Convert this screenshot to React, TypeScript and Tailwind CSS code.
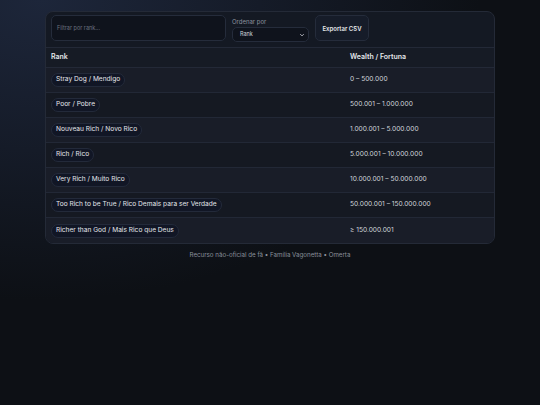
import React from "react";

const rows = [
  ["Stray Dog / Mendigo", "0 – 500.000"],
  ["Poor / Pobre", "500.001 – 1.000.000"],
  ["Nouveau Rich / Novo Rico", "1.000.001 – 5.000.000"],
  ["Rich / Rico", "5.000.001 – 10.000.000"],
  ["Very Rich / Muito Rico", "10.000.001 – 50.000.000"],
  ["Too Rich to be True / Rico Demais para ser Verdade", "50.000.001 – 150.000.000"],
  ["Richer than God / Mais Rico que Deus", "≥ 150.000.001"],
];

export default function App() {
  return (
    <div
      className="min-h-[405px] w-full pt-[11px] text-[#e5e7eb]"
      style={{
        fontFamily: "Inter, 'Noto Sans', sans-serif",
        background:
          "radial-gradient(ellipse 440px 300px at 40px 0px, #1d263a 0%, #151b28 50%, #0d1015 100%), #0d1015",
      }}
    >
      <div className="mx-auto w-[450px] overflow-hidden rounded-[8px] border border-[#242a37] bg-[#141923]">
        <div className="flex items-start gap-[6px] border-b border-[#232937] px-[5px] pt-[3px] pb-[5px]">
          <div className="flex h-[26px] w-[175px] items-center rounded-[5px] border border-[#252c3b] bg-[#0f131c] px-[5px] text-[5.5px] text-[#6b7280]">
            Filtrar por rank...
          </div>
          <div className="flex flex-col">
            <div className="mt-[2px] h-[10px] text-[6px] leading-[10px] text-[#8b919d]">Ordenar por</div>
            <div className="flex h-[15px] w-[77px] items-center justify-between rounded-[5px] border border-[#252c3b] bg-[#0f131c] pl-[7px] pr-[3px] text-[5.5px] text-[#d1d5db]">
              <span>Rank</span>
              <svg width="6" height="6" viewBox="0 0 10 10" fill="none">
                <path d="M2.5 4 L5 6.5 L7.5 4" stroke="#c9ccd3" strokeWidth="1.4" strokeLinecap="round" strokeLinejoin="round" />
              </svg>
            </div>
          </div>
          <div className="flex h-[26px] w-[54px] items-center justify-center rounded-[5px] border border-[#252c3b] bg-[#161c29] text-[6px] font-semibold text-[#e5e7eb]">
            Exportar CSV
          </div>
        </div>
        <div className="flex h-[20px] items-center border-b border-[#232937] bg-[#161b25] text-[7px] font-semibold text-[#e5e7eb]">
          <div className="w-[299px] pl-[5px]">Rank</div>
          <div className="pl-[5px]">Wealth / Fortuna</div>
        </div>
        {rows.map(([rank, wealth], i) => (
          <div
            key={rank}
            className={
              "flex h-[25px] items-center text-[6.6px] " +
              (i < rows.length - 1 ? "border-b border-[#222836] " : "") +
              (i % 2 === 0 ? "bg-[#191d28]" : "bg-[#151922]")
            }
          >
            <div className="w-[299px] pl-[5px]">
              <span className="inline-flex h-[14px] items-center rounded-full border border-[#232a3a] bg-[#111625] px-[4px] text-[#e5e7eb]">
                {rank}
              </span>
            </div>
            <div className="pl-[5px] text-[#d1d5db]">{wealth}</div>
          </div>
        ))}
      </div>
      <div className="mt-[6px] text-center text-[6.2px] text-[#8b919c]">
        Recurso não-oficial de fã • Família Vagonetta • Omerta
      </div>
    </div>
  );
}
